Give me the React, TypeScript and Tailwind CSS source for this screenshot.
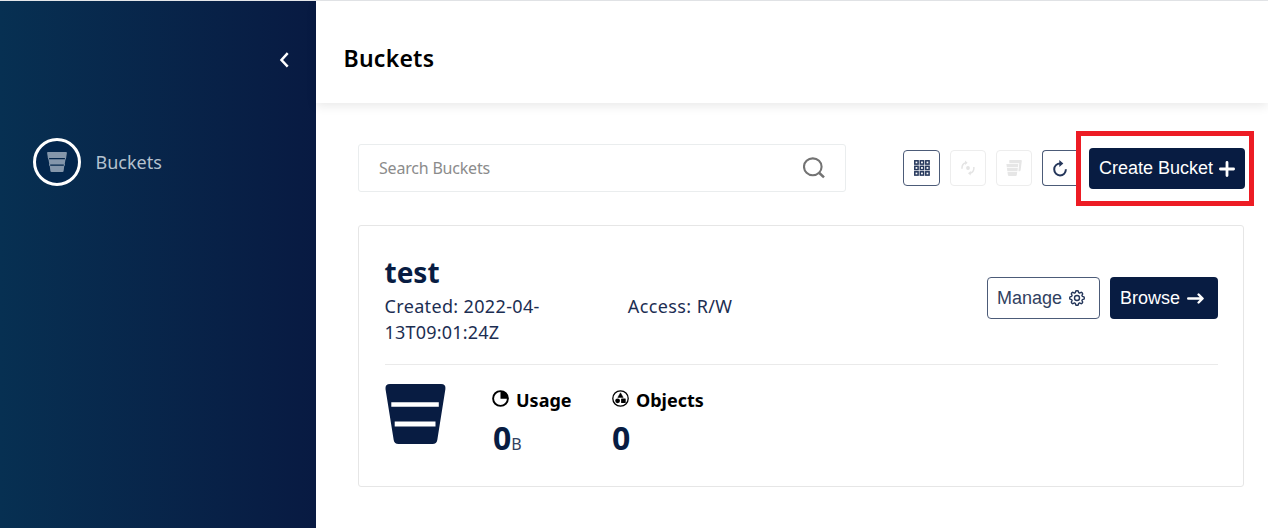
import React from 'react';

const UI = "font-['Noto_Sans',sans-serif]";
const ARIAL = "font-['Liberation_Sans',Arial,sans-serif]";

function ChevronLeft() {
  return (
    <svg width="10" height="16" viewBox="0 0 10 16" fill="none" stroke="#fff" strokeWidth="2.5">
      <path d="M8.7 1.2 L2.5 8 L8.7 14.6" />
    </svg>
  );
}

function SmallBucket() {
  return (
    <svg width="20" height="20" viewBox="0 0 20 20" fill="#8496ab">
      <path d="M1 0H19Q20 0 19.9 1L19.1 6H.9L.1 1Q0 0 1 0Z" />
      <path d="M1.5 7.2H18.5L17.7 12.4H2.3Z" />
      <path d="M2.7 13.8H17.3L16.6 19Q16.4 20 15.5 20H4.5Q3.6 20 3.4 19Z" />
      <path d="M.8 5.5h1.3v2H1.2zM17.9 5.5h1.3l-.4 2h-.9zM2 12h1.2v2h-.8zM16.8 12h1.2l-.4 2h-.8z" />
    </svg>
  );
}

function LargeBucket() {
  return (
    <svg width="61" height="60" viewBox="0 0 61 60">
      <path d="M5 0H56Q61 0 60.4 5L52.3 56Q51.7 60 47.5 60H13.5Q9.3 60 8.7 56L.5 5Q0 0 5 0Z" fill="#081c42" />
      <path d="M6.3 18.2H53.8V22.8H6.3ZM9.7 37.4H50.5V42.4H9.7Z" fill="#fff" />
    </svg>
  );
}

function SearchIcon() {
  return (
    <svg width="22" height="22" viewBox="0 0 22 22" fill="none" stroke="#737373" strokeWidth="2.1">
      <ellipse cx="9.8" cy="9.8" rx="8.8" ry="8.4" />
      <path d="M15.8 15.5L21 20.4" strokeWidth="2.5" />
    </svg>
  );
}

function GridIcon() {
  const cells = [0.8, 6.3, 11.8];
  return (
    <svg width="16" height="16" viewBox="0 0 16 16" fill="none" stroke="#24365a" strokeWidth="1.5">
      {cells.map((y) => cells.map((x) => <rect key={`${x}-${y}`} x={x} y={y} width="3.3" height="3.3" />))}
    </svg>
  );
}

function LifecycleIcon() {
  return (
    <svg width="14" height="16" viewBox="0 0 14 16" fill="none" stroke="#e4e4e4" strokeWidth="1.5">
      <path d="M1 8.8C.8 5.6 2.4 3.4 5 2.8M12.8 7C13.2 10 11.6 12.5 8.8 13.2" />
      <path d="M4 .4L6.6 2.7L4.2 5ZM9.8 11L7 13.2L9.6 15.6Z" fill="#e4e4e4" stroke="none" />
      <circle cx="7" cy="8" r="1.9" fill="#e4e4e4" stroke="none" />
    </svg>
  );
}

function BucketsIcon() {
  return (
    <svg width="16" height="16" viewBox="0 0 16 16" fill="#e6e6e6">
      <path d="M4 0H15Q16 0 15.8 1L14.6 10.2Q14.4 11.2 13.4 11.2H12.4L13.3 3.2H3.4L3.2 1Q3 0 4 0Z" />
      <path d="M.4 4.1H12.3L12 7.3H.8ZM.9 8H11.8L11.5 11.2H1.3ZM1.5 11.9H11.2L10.8 15Q10.6 16 9.8 16H2.9Q2.1 16 1.9 15Z" />
    </svg>
  );
}

function RefreshIcon() {
  return (
    <svg width="14" height="17" viewBox="0 0 14 17" fill="none" stroke="#24365a" strokeWidth="2">
      <path d="M7.5 3.5C3.8 3.4 1.2 6 1.2 9.3C1.2 12.7 3.8 15.4 7 15.4C10.2 15.4 12.8 13.2 12.9 9.3" />
      <path d="M6.3 0L10.3 3.5L6.3 7Z" fill="#24365a" stroke="none" />
    </svg>
  );
}

function PlusIcon() {
  return (
    <svg width="16" height="16" viewBox="0 0 16 16" stroke="#fff" strokeWidth="2.8" strokeLinecap="round">
      <path d="M8 1.4V14.6M1.4 8H14.6" />
    </svg>
  );
}

function GearIcon() {
  return (
    <svg width="16" height="16" viewBox="0 0 16 16" fill="none" stroke="#24365a" strokeWidth="1.4" strokeLinejoin="round">
      <path d="M6.8 1Q8 .4 9.2 1L9.7 2.7L10.5 3.1L12.1 2.3Q13.4 2.6 13.7 3.9L12.9 5.5L13.3 6.3L15 6.8Q15.6 8 15 9.2L13.3 9.7L12.9 10.5L13.7 12.1Q13.4 13.4 12.1 13.7L10.5 12.9L9.7 13.3L9.2 15Q8 15.6 6.8 15L6.3 13.3L5.5 12.9L3.9 13.7Q2.6 13.4 2.3 12.1L3.1 10.5L2.7 9.7L1 9.2Q.4 8 1 6.8L2.7 6.3L3.1 5.5L2.3 3.9Q2.6 2.6 3.9 2.3L5.5 3.1L6.3 2.7Z" />
      <circle cx="8" cy="8" r="2.5" />
    </svg>
  );
}

function ArrowIcon() {
  return (
    <svg width="17" height="12" viewBox="0 0 17 12" fill="none" stroke="#fff" strokeWidth="2.4" strokeLinecap="round" strokeLinejoin="round">
      <path d="M1.2 6.5H15M11.6 2.5L15.6 6.5L11.6 10.5" />
    </svg>
  );
}

function UsageIcon() {
  return (
    <svg width="17" height="17" viewBox="0 0 17 17">
      <circle cx="8.5" cy="8.5" r="7.4" fill="none" stroke="#000" strokeWidth="1.9" />
      <path d="M8.5 8.7V1A7.5 7.5 0 0 1 16.2 8.7Z" />
    </svg>
  );
}

function ObjectsIcon() {
  return (
    <svg width="17" height="17" viewBox="0 0 17 17">
      <circle cx="8.5" cy="8.5" r="7.7" fill="none" stroke="#000" strokeWidth="1.3" />
      <path d="M8.5 2.8L11.2 7.4H5.8Z" strokeLinejoin="round" stroke="#000" strokeWidth=".5" />
      <circle cx="5.6" cy="10.8" r="2.4" />
      <rect x="9.1" y="8.5" width="4.6" height="4.6" rx=".6" />
    </svg>
  );
}

export default function App() {
  return (
    <div className={`flex h-[528px] w-[1268px] flex-col overflow-hidden bg-white text-[#081c42] ${UI}`}>
      <div className="h-px shrink-0 bg-[#e5e7ea]" />
      <div className="flex min-h-0 flex-1">
        <aside className="flex w-[316px] shrink-0 flex-col bg-linear-to-r from-[#073052] to-[#081a42]">
          <div className="flex justify-end pt-[51px] pr-[27px]">
            <ChevronLeft />
          </div>
          <nav className="mt-[70px] flex items-center pl-[33px]">
            <span className="flex size-12 items-center justify-center rounded-full border-3 border-white bg-[#03264d]">
              <SmallBucket />
            </span>
            <span className="-mt-px ml-[14.5px] text-[18px] leading-6 text-[#b4c1ce]">Buckets</span>
          </nav>
        </aside>

        <main className="flex min-w-0 flex-1 flex-col">
          <header className="flex h-[102px] shrink-0 items-center pl-[27.5px] shadow-[0_3px_10px_rgba(0,0,0,0.09)]">
            <h1 className="mt-3 text-[23px] leading-8 font-semibold tracking-[0.25px] text-black">Buckets</h1>
          </header>

          <section className="flex flex-1 flex-col pl-[42px]">
            <div className="mt-[29px] flex h-[74px]">
              <div className="mt-3 flex h-[48px] w-[488px] items-center justify-between rounded-[3px] border border-[#eaedee] pr-[20px] pl-5">
                <span className="-mt-px text-[16px] leading-6 tracking-[-0.2px] text-[#8b8b8b]">Search Buckets</span>
                <SearchIcon />
              </div>
              <div className="mt-[18px] ml-[57px] flex h-9 gap-[10px]">
                <button className="flex w-[37px] items-center justify-center rounded-[4px] border border-[#4c5b78]"><GridIcon /></button>
                <button className="flex w-9 items-center justify-center rounded-[4px] border border-[#ededed]"><LifecycleIcon /></button>
                <button className="flex w-9 items-center justify-center rounded-[4px] border border-[#ededed]"><BucketsIcon /></button>
                <button className="flex w-[34px] items-center rounded-l-[4px] border border-r-0 border-[#4c5b78] pl-[10px]"><RefreshIcon /></button>
              </div>
              <div className="-mt-px flex h-[75px] w-[178px] border-[5px] border-[#ed1c24] pt-[12px] pl-2">
                <button className={`flex h-[41px] w-[156px] shrink-0 items-center justify-between rounded-[4px] bg-[#081c42] px-[10px] text-[18px] text-white ${ARIAL}`}>
                  <span className="-mt-px whitespace-nowrap">Create Bucket</span>
                  <PlusIcon />
                </button>
              </div>
            </div>

            <article className="mt-[19px] h-[262px] w-[886px] rounded-[3px] border border-[#e6e6e6] pr-[25px] pl-[25.5px]">
              <div className="flex h-[139px] border-b border-[#eaeaea]">
                <div className="w-[243.5px] pt-[27px]">
                  <h2 className="text-[28px] leading-[38px] font-bold">test</h2>
                  <p className="mt-[2px] w-[180px] text-[18px] leading-[26px] tracking-[0.35px] text-[#1c2e52]">Created: 2022-04-<br /><span className="tracking-[0.2px]">13T09:01:24Z</span></p>
                </div>
                <div className="w-[359.5px] pt-[67px] text-[18px] leading-[26px] tracking-[0.4px] text-[#1c2e52]">Access: R/W</div>
                <div className={`flex gap-[10px] pt-[51px] text-[18px] ${ARIAL}`}>
                  <button className="flex h-[42px] w-[113px] items-center justify-between rounded-[4px] border border-[#4c5b78] pr-[14px] pl-[9px] text-[#31415f]">Manage<GearIcon /></button>
                  <button className="flex h-[42px] w-[108px] items-center justify-between rounded-[4px] bg-[#081c42] pr-[14px] pl-[10px] text-white">Browse<ArrowIcon /></button>
                </div>
              </div>
              <div className="flex pt-[19px]">
                <LargeBucket />
                <div className="ml-[46.5px] w-[120px]">
                  <div className="flex h-8 items-center gap-[7px] text-[18px] leading-8 font-bold text-black"><span className="-mt-1"><UsageIcon /></span>Usage</div>
                  <div className="flex h-[44px] items-baseline pl-px leading-[44px]"><span className="text-[32px] font-bold">0</span><span className="text-[16px] text-[#31415f]">B</span></div>
                </div>
                <div>
                  <div className="flex h-8 items-center gap-[7px] text-[18px] leading-8 font-bold text-black"><span className="-mt-1"><ObjectsIcon /></span>Objects</div>
                  <div className="text-[32px] leading-[44px] font-bold">0</div>
                </div>
              </div>
            </article>
          </section>
        </main>
      </div>
    </div>
  );
}
